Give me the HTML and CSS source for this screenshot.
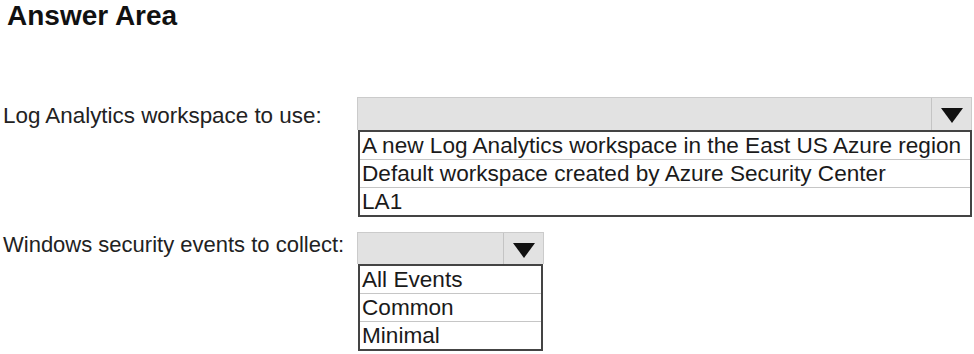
FILE: index.html
```html
<!DOCTYPE html>
<html lang="en">
<head>
    <meta charset="UTF-8">
    <title>Answer Area</title>
    <link rel="stylesheet" href="styles.css">
</head>
<body>
    <h1 class="title">Answer Area</h1>

    <div class="answer-row">
        <div class="answer-label">Log Analytics workspace to use:</div>
        <div class="dropdown dropdown-wide">
            <div class="dropdown-head">
                <span class="dropdown-value"></span>
                <span class="dropdown-arrow">
                    <svg width="22" height="15" viewBox="0 0 22 15"><polygon points="0,0 22,0 11,15" fill="#111"/></svg>
                </span>
            </div>
            <ul class="dropdown-list">
                <li>A new Log Analytics workspace in the East US Azure region</li>
                <li>Default workspace created by Azure Security Center</li>
                <li>LA1</li>
            </ul>
        </div>
    </div>

    <div class="answer-row answer-row-second">
        <div class="answer-label answer-label-top">Windows security events to collect:</div>
        <div class="dropdown dropdown-narrow">
            <div class="dropdown-head">
                <span class="dropdown-value"></span>
                <span class="dropdown-arrow">
                    <svg width="22" height="15" viewBox="0 0 22 15"><polygon points="0,0 22,0 11,15" fill="#111"/></svg>
                </span>
            </div>
            <ul class="dropdown-list">
                <li>All Events</li>
                <li>Common</li>
                <li>Minimal</li>
            </ul>
        </div>
    </div>
</body>
</html>
```

FILE: styles.css
```css
body {
    margin: 0;
    padding: 0;
    background-color: #fff;
    color: #222;
    font-family: "Liberation Sans", Arial, sans-serif;
}
.title {
    margin: 0;
    padding-left: 7px;
    font-size: 28px;
    line-height: 31px;
    font-weight: bold;
    color: #111;
}
.answer-row {
    display: grid;
    grid-template-columns: 357px auto;
    margin-top: 66px;
}
.answer-row-second {
    margin-top: 15px;
}
.answer-label {
    padding-left: 3px;
    padding-top: 8px;
    font-size: 22.4px;
    line-height: 22px;
    color: #222;
}
.answer-label-top {
    padding-top: 2px;
    font-size: 22px;
}
.dropdown-wide {
    width: 615px;
}
.dropdown-narrow {
    width: 187px;
}
.dropdown-head {
    display: flex;
    height: 33px;
    box-sizing: border-box;
    border: 1px solid #cbcbcb;
    border-bottom: none;
    background-color: #e2e2e2;
}
.dropdown-narrow .dropdown-head {
    height: 32px;
}
.dropdown-value {
    flex: 1;
}
.dropdown-arrow {
    width: 40px;
    display: flex;
    align-items: center;
    justify-content: center;
    padding-top: 3px;
    box-sizing: border-box;
    border-left: 1px solid #c4c4c4;
}
.dropdown-list {
    list-style: none;
    margin: 0 0 0 1px;
    padding: 0;
    border: 2px solid #444;
}
.dropdown-narrow .dropdown-list {
    margin-right: 1px;
}
.dropdown-list li {
    height: 27px;
    box-sizing: border-box;
    padding: 1px 0 0 2px;
    font-size: 22.6px;
    line-height: 26px;
    color: #1a1a1a;
    white-space: nowrap;
    overflow: hidden;
}
.dropdown-list li + li {
    border-top: 1px solid #c6c6c6;
    height: 28px;
}
```
